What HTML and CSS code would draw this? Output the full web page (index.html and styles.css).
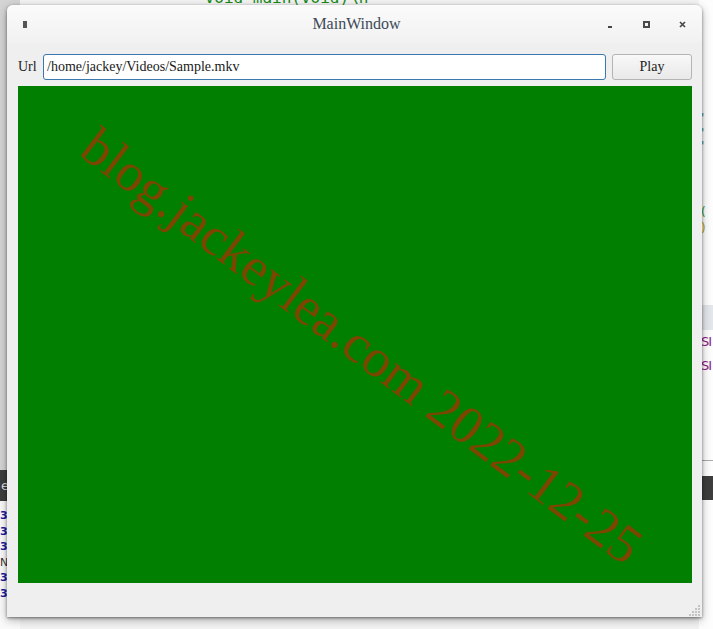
FILE: index.html
```html
<!doctype html>
<html lang="en">
<head>
  <meta charset="utf-8" />
  <meta name="viewport" content="width=device-width,initial-scale=1" />
  <title>MainWindow</title>
  <link rel="stylesheet" href="styles.css">
</head>
<body>
  <!-- Desktop: editor behind the window -->
  <div class="desktop">
    <div class="editor-left">
      <div class="gutter"></div>
      <div class="panel-bar">e</div>
      <div class="log">
        <span>3</span><span>3</span><span>3</span><span class="n">N</span><span>3</span><span>3</span>
      </div>
    </div>
    <div class="code-top">"void main(void)\n"</div>
    <div class="editor-right">
      <span class="c1" style="top:112px">'</span>
      <span class="c1" style="top:127px">'</span>
      <span class="c1" style="top:140px">'</span>
      <span class="c2" style="top:206px">(</span>
      <span class="c3" style="top:222px">)</span>
      <div class="sel"></div>
      <span class="c4" style="top:336px">SI</span>
      <span class="c4" style="top:360px">SI</span>
      <div class="rule"></div>
      <div class="panel-bar-r"></div>
    </div>
  </div>

  <!-- MainWindow -->
  <div class="window">
    <div class="titlebar">
      <div class="tb-left"><span class="app-icon"></span></div>
      <div class="tb-title">MainWindow</div>
      <div class="tb-right">
        <span class="tb-btn"><span class="ico-min"></span></span>
        <span class="tb-btn"><span class="ico-max"></span></span>
        <span class="tb-btn">
          <svg width="7" height="7" viewBox="0 0 7 7"><path d="M1 1L6 6M6 1L1 6" stroke="#4a4a4a" stroke-width="1.7"/></svg>
        </span>
      </div>
    </div>

    <div class="central">
      <div class="url-row">
        <label for="url">Url</label>
        <input id="url" type="text" value="/home/jackey/Videos/Sample.mkv">
        <button class="play">Play</button>
      </div>
      <div class="video">
        <span class="watermark">blog.jackeylea.com 2022-12-25</span>
      </div>
    </div>

    <div class="statusbar">
      <svg class="grip" width="12" height="12" viewBox="0 0 12 12">
        <g fill="#c4c4c4">
          <rect x="9" y="1" width="2" height="2"/>
          <rect x="6" y="4" width="2" height="2"/><rect x="9" y="4" width="2" height="2"/>
          <rect x="3" y="7" width="2" height="2"/><rect x="6" y="7" width="2" height="2"/><rect x="9" y="7" width="2" height="2"/>
          <rect x="0" y="10" width="2" height="2"/><rect x="3" y="10" width="2" height="2"/><rect x="6" y="10" width="2" height="2"/><rect x="9" y="10" width="2" height="2"/>
        </g>
      </svg>
    </div>
  </div>
</body>
</html>
```

FILE: styles.css
```css
html, body { margin:0; padding:0; height:100%; }
body {
  width:713px; height:629px; overflow:hidden; position:relative;
  background:#f3f3f3;
  font-family:"Liberation Serif", serif;
}

/* Desktop behind */
.desktop { position:absolute; inset:0; }
.editor-left {
  position:absolute; left:0; top:0; width:20px; height:629px;
  display:flex; flex-direction:column;
}
.gutter { height:470px; background:#d4d4d4; }
.panel-bar {
  height:31px; background:#3d3d3d; color:#ddd;
  font:13px "DejaVu Sans", sans-serif; line-height:31px; padding-left:1px;
}
.log {
  background:#fafafa; flex:1; padding-top:7px;
  display:flex; flex-direction:column;
  font:bold 11px "DejaVu Sans", sans-serif; color:#1a1aa0; line-height:15.5px;
}
.log .n { color:#333; font-weight:normal; }
.code-top {
  position:absolute; left:195px; top:-12px;
  font:16px "DejaVu Sans Mono", monospace; color:#178a17;
}
.editor-right {
  position:absolute; right:0; top:0; width:14px; height:629px; background:#fdfdfd;
  font:12px "DejaVu Sans", sans-serif;
}
.editor-right span { position:absolute; left:2px; line-height:12px; }
.c1 { color:#2a8a8a; }
.c2 { color:#2a9a2a; }
.c3 { color:#b8a000; }
.c4 { color:#8a1a8a; font-size:13px; letter-spacing:-1px; }
.sel { position:absolute; left:0; right:0; top:305px; height:25px; background:#e3e6ea; }
.rule { position:absolute; left:0; right:0; top:460px; height:1px; background:#aaa; }
.panel-bar-r { position:absolute; left:0; right:0; top:476px; height:24px; background:#3d3d3d; }

/* Window */
.window {
  position:absolute; left:7px; top:5px; width:695px; height:612px;
  background:#efefef; border-radius:6px 6px 0 0;
  box-shadow:0 1px 3px rgba(0,0,0,0.45), 0 3px 10px rgba(0,0,0,0.3);
  display:flex; flex-direction:column;
}
.titlebar {
  height:38px; flex:none;
  display:grid; grid-template-columns:1fr auto 1fr; align-items:center;
  background:linear-gradient(#fbfbfb,#f1f1f1);
  border-radius:6px 6px 0 0;
  padding:0 12px 0 16px;
}
.app-icon { display:block; width:4px; height:7px; background:#555; margin-top:1px; }
.tb-title { font-size:16px; color:#3c4a58; }
.tb-right { display:flex; justify-content:flex-end; gap:20px; }
.tb-btn { width:16px; height:16px; display:flex; align-items:center; justify-content:center; }
.ico-min { width:4px; height:2px; background:#444; margin-top:5px; }
.ico-max { width:3px; height:3px; border:2px solid #4a4a4a; margin-top:1px; }
.tb-btn svg { margin-top:1px; }

.central {
  flex:1; display:flex; flex-direction:column; gap:6px;
  padding:11px 10px 0 11px;
}
.url-row { display:flex; align-items:center; height:26px; }
.url-row label { font-size:14px; color:#222; width:25px; flex:none; }
.url-row input {
  flex:1; height:26px; box-sizing:border-box; margin:0;
  border:1px solid #3c78b0; border-radius:3px; background:#fff;
  font:14px "Liberation Serif", serif; color:#1a1a1a; padding:0 3px; outline:none;
}
.play {
  width:80px; height:26px; margin-left:6px; box-sizing:border-box;
  border:1px solid #b4b4b4; border-radius:3px;
  background:linear-gradient(#f8f8f8,#e9e9e9);
  font:14px "Liberation Serif", serif; color:#222;
}
.video {
  height:497px; background:#007f00; position:relative; overflow:hidden;
}
.watermark {
  position:absolute; left:344px; top:260px;
  transform:translate(-50%,-50%) rotate(37deg);
  white-space:nowrap; font-size:54px; color:#7c4600;
}
.statusbar {
  flex:1; display:flex; justify-content:flex-end; align-items:flex-end;
}
.grip { margin:0 1px 1px 0; }
```
